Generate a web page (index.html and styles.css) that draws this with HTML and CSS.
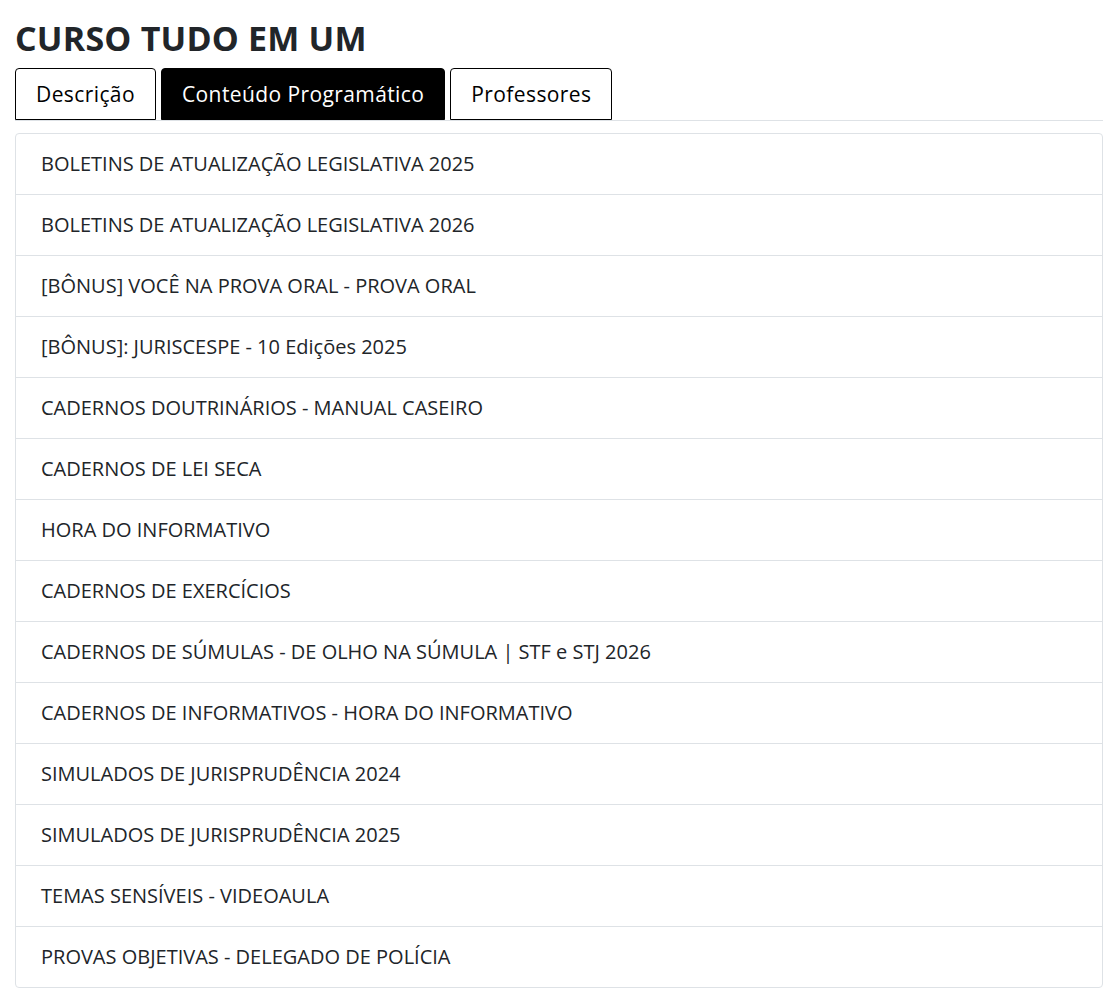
FILE: index.html
```html
<!DOCTYPE html>
<html lang="pt-BR">

<head>
    <meta charset="UTF-8">
    <meta name="viewport" content="width=device-width, initial-scale=1.0">
    <title>Curso Tudo em Um</title>
    <link rel="stylesheet" href="styles.css">
</head>

<body>

    <div class="curso">
        <h1 class="titulo">CURSO TUDO EM UM</h1>

        <ul class="abas">
            <li class="aba">Descrição</li>
            <li class="aba ativa">Conteúdo Programático</li>
            <li class="aba">Professores</li>
        </ul>

        <ul class="conteudo">
            <li class="item">BOLETINS DE ATUALIZAÇÃO LEGISLATIVA 2025</li>
            <li class="item">BOLETINS DE ATUALIZAÇÃO LEGISLATIVA 2026</li>
            <li class="item">[BÔNUS] VOCÊ NA PROVA ORAL - PROVA ORAL</li>
            <li class="item">[BÔNUS]: JURISCESPE - 10 Edições 2025</li>
            <li class="item">CADERNOS DOUTRINÁRIOS - MANUAL CASEIRO</li>
            <li class="item">CADERNOS DE LEI SECA</li>
            <li class="item">HORA DO INFORMATIVO</li>
            <li class="item">CADERNOS DE EXERCÍCIOS</li>
            <li class="item">CADERNOS DE SÚMULAS - DE OLHO NA SÚMULA | STF e STJ 2026</li>
            <li class="item">CADERNOS DE INFORMATIVOS - HORA DO INFORMATIVO</li>
            <li class="item">SIMULADOS DE JURISPRUDÊNCIA 2024</li>
            <li class="item">SIMULADOS DE JURISPRUDÊNCIA 2025</li>
            <li class="item">TEMAS SENSÍVEIS - VIDEOAULA</li>
            <li class="item">PROVAS OBJETIVAS - DELEGADO DE POLÍCIA</li>
        </ul>
    </div>

</body>

</html>
```

FILE: styles.css
```css
* {
    padding: 0;
    margin: 0;
    list-style: none;
    box-sizing: border-box;
}

body {
    font-family: "Open Sans", "Liberation Sans", sans-serif;
    color: #212529;
    background: #fff;
}

.curso {
    padding: 16px 3px 0 15px;
}

.titulo {
    font-size: 34px;
    font-weight: 700;
    line-height: 44px;
    letter-spacing: 0.2px;
    margin-bottom: 8px;
}

/* abas */
.abas {
    display: flex;
    gap: 5px;
    border-bottom: 1px solid #dee2e6;
}

.aba {
    height: 52px;
    padding: 0 20px;
    font-size: 21px;
    line-height: 50px;
    letter-spacing: 0.4px;
    color: #000;
    border: 1px solid #000;
    border-radius: 4px 4px 0 0;
    cursor: pointer;
}

.aba.ativa {
    background-color: #000;
    color: #fff;
}

/* lista de conteudo */
.conteudo {
    margin-top: 12px;
    border: 1px solid #dee2e6;
    border-radius: 4px;
}

.item {
    padding: 15px 25px;
    font-size: 20px;
    line-height: 30px;
    border-bottom: 1px solid #dee2e6;
}

.item:last-child {
    border-bottom: none;
}
```
